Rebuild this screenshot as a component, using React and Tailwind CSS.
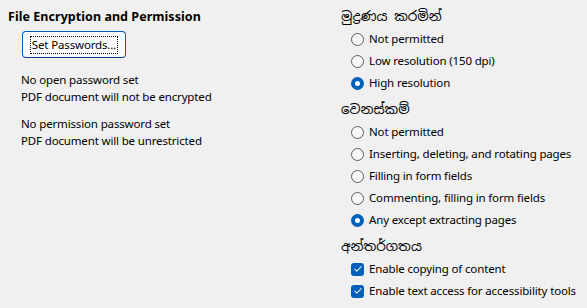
import { Check } from 'lucide-react';

function Radio({ label, checked }) {
  return (
    <div className="h-[22px] flex items-center pl-[10px] whitespace-nowrap">
      {checked ? (
        <span className="w-[13px] h-[13px] shrink-0 rounded-full bg-[#005fb8] flex items-center justify-center">
          <span className="w-[5px] h-[5px] rounded-full bg-white" />
        </span>
      ) : (
        <span className="w-[13px] h-[13px] shrink-0 rounded-full border border-[#5f5f5f] bg-[#f7f7f7]" />
      )}
      <span className="ml-[5px]">{label}</span>
    </div>
  );
}

function CheckBox({ label }) {
  return (
    <div className="h-[22px] flex items-center pl-[10px] whitespace-nowrap">
      <span className="w-[13px] h-[13px] shrink-0 rounded-[3px] bg-[#005fb8] flex items-center justify-center">
        <Check size={10} strokeWidth={2.5} className="text-white" />
      </span>
      <span className="ml-[5px]">{label}</span>
    </div>
  );
}

function Heading({ children, className = '' }) {
  return (
    <div
      className={`flex items-center text-[13.5px] tracking-normal ${className}`}
      style={{ fontFamily: '"Noto Sans Sinhala", "Iskoola Pota", "Noto Sans", sans-serif' }}
    >
      {children}
    </div>
  );
}

export default function App() {
  return (
    <div
      className="w-[587px] h-[308px] bg-[#f0f0f0] text-black text-[11.5px] tracking-[-0.15px] flex overflow-hidden"
      style={{ fontFamily: '"Noto Sans", "Open Sans", sans-serif' }}
    >
      <div className="w-[341px] pl-[8px] pt-[8px]">
        <div className="font-bold text-[12.5px] leading-[17px] tracking-[0.05px]">File Encryption and Permission</div>
        <button className="mt-[6px] ml-[14px] w-[104px] h-[27px] rounded-[4px] border border-[#005fb8] border-b-[#003e92] bg-[#fdfdfd] flex items-center justify-center">
          <span className="px-[1px] leading-[16px] outline outline-1 outline-dotted outline-black">Set Passwords...</span>
        </button>
        <div className="ml-[13px] mt-[13px] leading-[17px]">
          <div>No open password set</div>
          <div>PDF document will not be encrypted</div>
          <div className="mt-[10px]">No permission password set</div>
          <div>PDF document will be unrestricted</div>
        </div>
      </div>

      <div className="flex-1 pt-[5px]">
        <Heading className="h-[23px]">මුද්‍රණය කරමින්</Heading>
        <Radio label="Not permitted" />
        <Radio label="Low resolution (150 dpi)" />
        <Radio label="High resolution" checked />

        <Heading className="h-[24px] mt-[3px]">වෙනස්කම්</Heading>
        <Radio label="Not permitted" />
        <Radio label="Inserting, deleting, and rotating pages" />
        <Radio label="Filling in form fields" />
        <Radio label="Commenting, filling in form fields" />
        <Radio label="Any except extracting pages" checked />

        <Heading className="h-[24px] mt-[3px]">අන්තර්ගතය</Heading>
        <CheckBox label="Enable copying of content" />
        <CheckBox label="Enable text access for accessibility tools" />
      </div>
    </div>
  );
}
